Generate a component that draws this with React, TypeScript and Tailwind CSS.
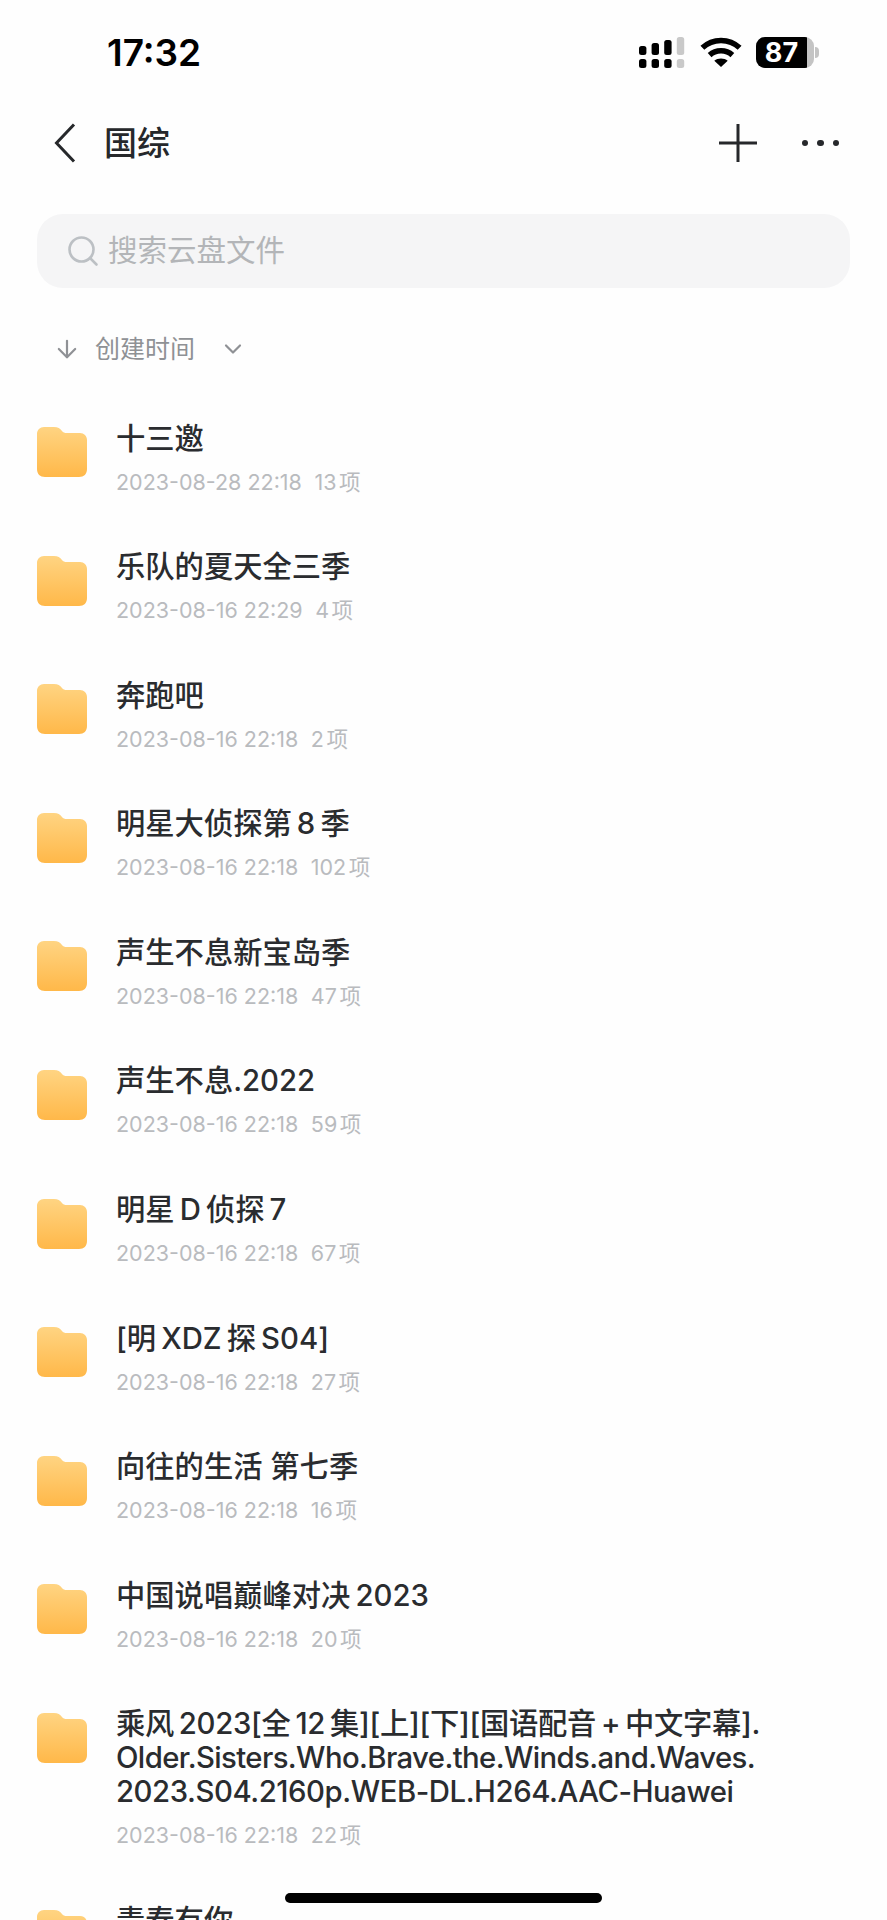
import { ChevronDown, ArrowDown, Search } from "lucide-react";

const font = "font-['Inter','Noto_Sans_CJK_SC',sans-serif]";

// thin spaces (U+2009) between CJK and latin runs, like the iOS text layout
const folders = [
  { lines: ["十三邀"], date: "2023-08-28 22:18", count: "13" },
  { lines: ["乐队的夏天全三季"], date: "2023-08-16 22:29", count: "4" },
  { lines: ["奔跑吧"], date: "2023-08-16 22:18", count: "2" },
  { lines: ["明星大侦探第\u20098\u2009季"], date: "2023-08-16 22:18", count: "102" },
  { lines: ["声生不息新宝岛季"], date: "2023-08-16 22:18", count: "47" },
  { lines: ["声生不息.2022"], date: "2023-08-16 22:18", count: "59" },
  { lines: ["明星\u2009D\u2009侦探\u20097"], date: "2023-08-16 22:18", count: "67" },
  { lines: ["[明\u2009XDZ\u2009探\u2009S04]"], date: "2023-08-16 22:18", count: "27" },
  { lines: ["向往的生活 第七季"], date: "2023-08-16 22:18", count: "16" },
  { lines: ["中国说唱巅峰对决\u20092023"], date: "2023-08-16 22:18", count: "20" },
  {
    lines: [
      "乘风\u20092023[全\u200912\u2009集][上][下][国语配音\u2009+\u2009中文字幕].",
      "Older.Sisters.Who.Brave.the.Winds.and.Waves.",
      "2023.S04.2160p.WEB-DL.H264.AAC-Huawei",
    ],
    date: "2023-08-16 22:18",
    count: "22",
  },
  { lines: ["青春有你"], date: "2023-08-16 22:18", count: "9" },
];

const lineTracking = ["tracking-[-0.28px]", "tracking-[-0.6px]", "tracking-[-0.43px]"];

function FolderIcon({ id }: { id: number }) {
  return (
    <svg width="50" height="50" viewBox="0 0 50 50" className="shrink-0 mt-[5.5px]">
      <defs>
        <linearGradient id={`folder-${id}`} x1="0" y1="0" x2="0" y2="1">
          <stop offset="0" stopColor="#ffd482" />
          <stop offset="1" stopColor="#ffb849" />
        </linearGradient>
      </defs>
      <path
        d="M7 0H17C21 0 23 1.5 25 4C26.2 5.5 27.5 6 30 6H43C47 6 50 9 50 13V42C50 47 47 50 42 50H8C3 50 0 47 0 42V7C0 3 3 0 7 0Z"
        fill={`url(#folder-${id})`}
      />
    </svg>
  );
}

function SignalIcon() {
  const tops = [9, 6, 3, 0];
  return (
    <svg width="46" height="31" viewBox="0 0 46 31">
      {tops.map((t, i) => (
        <g key={i} fill={i === 3 ? "#c9c9c9" : "#000"}>
          <rect x={i * 12.6} y={t} width="7.4" height={18 - t} rx="2.5" />
          <rect x={i * 12.6} y="22" width="7.4" height="9" rx="2.5" />
        </g>
      ))}
    </svg>
  );
}

function WifiIcon() {
  return (
    <svg width="42" height="31" viewBox="0 0 40 30" fill="none" stroke="#000" strokeWidth="5.4">
      <path d="M2 10.5C12 1 28 1 38 10.5" />
      <path d="M9 17.5C15 12 25 12 31 17.5" />
      <path d="M20 29L13.5 23C17 20 23 20 26.5 23Z" fill="#000" stroke="none" />
    </svg>
  );
}

function Battery() {
  return (
    <div className="flex items-center">
      <div className="relative w-[58px] h-[31px] rounded-[9px] overflow-hidden bg-[#c4c4c4]">
        <div className="w-[51px] h-full bg-black flex items-center justify-center">
          <span className="text-white text-[27px] leading-none font-bold font-['Inter',sans-serif]">87</span>
        </div>
      </div>
      <div className="w-[4px] h-[11px] ml-[1px] rounded-r-full bg-[#c4c4c4]" />
    </div>
  );
}

export default function App() {
  return (
    <div className={`relative h-[1920px] w-full overflow-hidden bg-[#fefefe] ${font}`}>
      <div className="flex items-center justify-between h-[104px] pl-[107px] pr-[68px]">
        <span className="text-[37px] leading-none font-semibold text-black">17:32</span>
        <div className="flex items-center gap-[14.5px]">
          <SignalIcon />
          <WifiIcon />
          <Battery />
        </div>
      </div>

      <header className="flex items-center justify-between h-[78px] pl-[54px] pr-[48px]">
        <div className="flex items-center gap-[28px]">
          <svg width="22" height="40" viewBox="0 0 22 40" fill="none" stroke="#26282b" strokeWidth="3">
            <path d="M20 1.5L2.5 20L20 38.5" />
          </svg>
          <span className="text-[33px] leading-none font-medium text-[#26282b]">国综</span>
        </div>
        <div className="flex items-center gap-[45px]">
          <svg width="38" height="38" viewBox="0 0 38 38" stroke="#26282b" strokeWidth="3">
            <path d="M0 19H38M19 0V38" />
          </svg>
          <div className="flex items-center gap-[9px]">
            <span className="w-[6.5px] h-[6.5px] rounded-full bg-[#26282b]" />
            <span className="w-[6.5px] h-[6.5px] rounded-full bg-[#26282b]" />
            <span className="w-[6.5px] h-[6.5px] rounded-full bg-[#26282b]" />
          </div>
        </div>
      </header>

      <div className="mx-[37px] mt-[32px] h-[74px] rounded-[26px] bg-[#f5f5f6] flex items-center pl-[28px] gap-[7px]">
        <Search size={36} strokeWidth={2.6} absoluteStrokeWidth className="text-[#bcc0c4]" />
        <span className="text-[29.5px] leading-none text-[#b3b5b8]">搜索云盘文件</span>
      </div>

      <div className="flex items-center h-[34px] mt-[44px] pl-[53px] text-[#8f9195]">
        <ArrowDown size={28} strokeWidth={2.2} absoluteStrokeWidth />
        <span className="ml-[14px] text-[25px] leading-none">创建时间</span>
        <ChevronDown size={28} strokeWidth={2.2} absoluteStrokeWidth className="ml-[24px]" />
      </div>

      <div className="mt-[55.5px] flex flex-col pl-[37px] pr-[40px]">
        {folders.map((f, i) => (
          <div key={i} className="flex gap-[29px] pb-[55.6px]">
            <FolderIcon id={i} />
            <div className="min-w-0">
              <div className="text-[29.3px] leading-[34px] font-medium text-[#2a2c2f] whitespace-pre">
                {f.lines.map((line, n) => (
                  <div key={n} className={f.lines.length > 1 ? lineTracking[n] : ""}>
                    {line}
                  </div>
                ))}
              </div>
              <div className="mt-[13px] flex items-baseline text-[21.5px] leading-[26px] text-[#b9bbbe] whitespace-pre">
                <span>{f.date}</span>
                <span className="ml-[12.5px]">{f.count}</span>
                <span className="ml-[2.5px]">项</span>
              </div>
            </div>
          </div>
        ))}
      </div>

      <div className="absolute left-[285px] top-[1893px] w-[317px] h-[10px] rounded-full bg-black" />
    </div>
  );
}
